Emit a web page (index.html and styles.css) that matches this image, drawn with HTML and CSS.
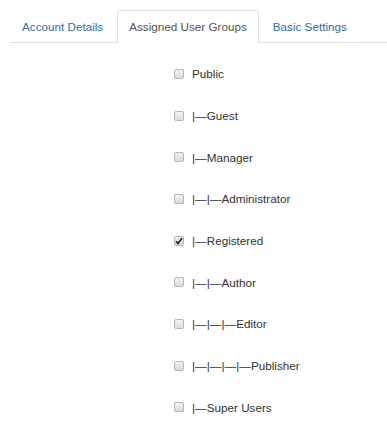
FILE: index.html
```html
<!DOCTYPE html>
<html lang="en">
  <head>
    <meta charset="UTF-8" />
    <meta name="viewport" content="width=device-width, initial-scale=1.0" />
    <title>User Groups</title>
    <link rel="stylesheet" href="styles.css">
  </head>
  <body>
    <ul class="tabs">
      <li class="tab"><a href="#">Account Details</a></li>
      <li class="tab active"><a href="#">Assigned User Groups</a></li>
      <li class="tab"><a href="#">Basic Settings</a></li>
    </ul>
    <ul class="groups">
      <li class="group"><span class="box"></span><span class="name">Public</span></li>
      <li class="group"><span class="box"></span><span class="name">|—Guest</span></li>
      <li class="group"><span class="box"></span><span class="name">|—Manager</span></li>
      <li class="group"><span class="box"></span><span class="name">|—|—Administrator</span></li>
      <li class="group">
        <span class="box checked">
          <svg width="8" height="8" viewBox="0 0 8 8"><path d="M1 4.2 L3 6.4 L7 1.2" fill="none" stroke="#222" stroke-width="1.7"/></svg>
        </span>
        <span class="name">|—Registered</span>
      </li>
      <li class="group"><span class="box"></span><span class="name">|—|—Author</span></li>
      <li class="group"><span class="box"></span><span class="name">|—|—|—Editor</span></li>
      <li class="group"><span class="box"></span><span class="name">|—|—|—|—Publisher</span></li>
      <li class="group"><span class="box"></span><span class="name">|—Super Users</span></li>
    </ul>
  </body>
</html>
```

FILE: styles.css
```css
body {
  margin: 0;
  padding: 10px 0 0 10px;
  background-color: #fff;
  font-family: "Liberation Sans", Arial, sans-serif;
  font-size: 11.7px;
  color: #333;
}

.tabs {
  display: flex;
  list-style: none;
  margin: 0;
  padding: 0;
  border-bottom: 1px solid #ddd;
}

.tab {
  margin-right: 2px;
  margin-bottom: -1px;
}

.tab a {
  display: block;
  padding: 7px 11px;
  line-height: 17px;
  border: 1px solid transparent;
  border-radius: 4px 4px 0 0;
  color: #336ca3;
  text-decoration: none;
}

.tab.active a {
  color: #555;
  background-color: #fff;
  border-color: #ddd;
  border-bottom-color: #fff;
}

.groups {
  list-style: none;
  margin: 10px 0 0;
  padding: 0 0 0 164px;
}

.group {
  display: flex;
  align-items: center;
  height: 41.7px;
}

.box {
  display: flex;
  align-items: center;
  justify-content: center;
  box-sizing: border-box;
  width: 10px;
  height: 10px;
  margin-right: 8px;
  border: 1px solid #b5b5b5;
  border-radius: 2px;
  background: linear-gradient(#f2f2f2, #dcdcdc);
}

.name {
  color: #333;
}
```
